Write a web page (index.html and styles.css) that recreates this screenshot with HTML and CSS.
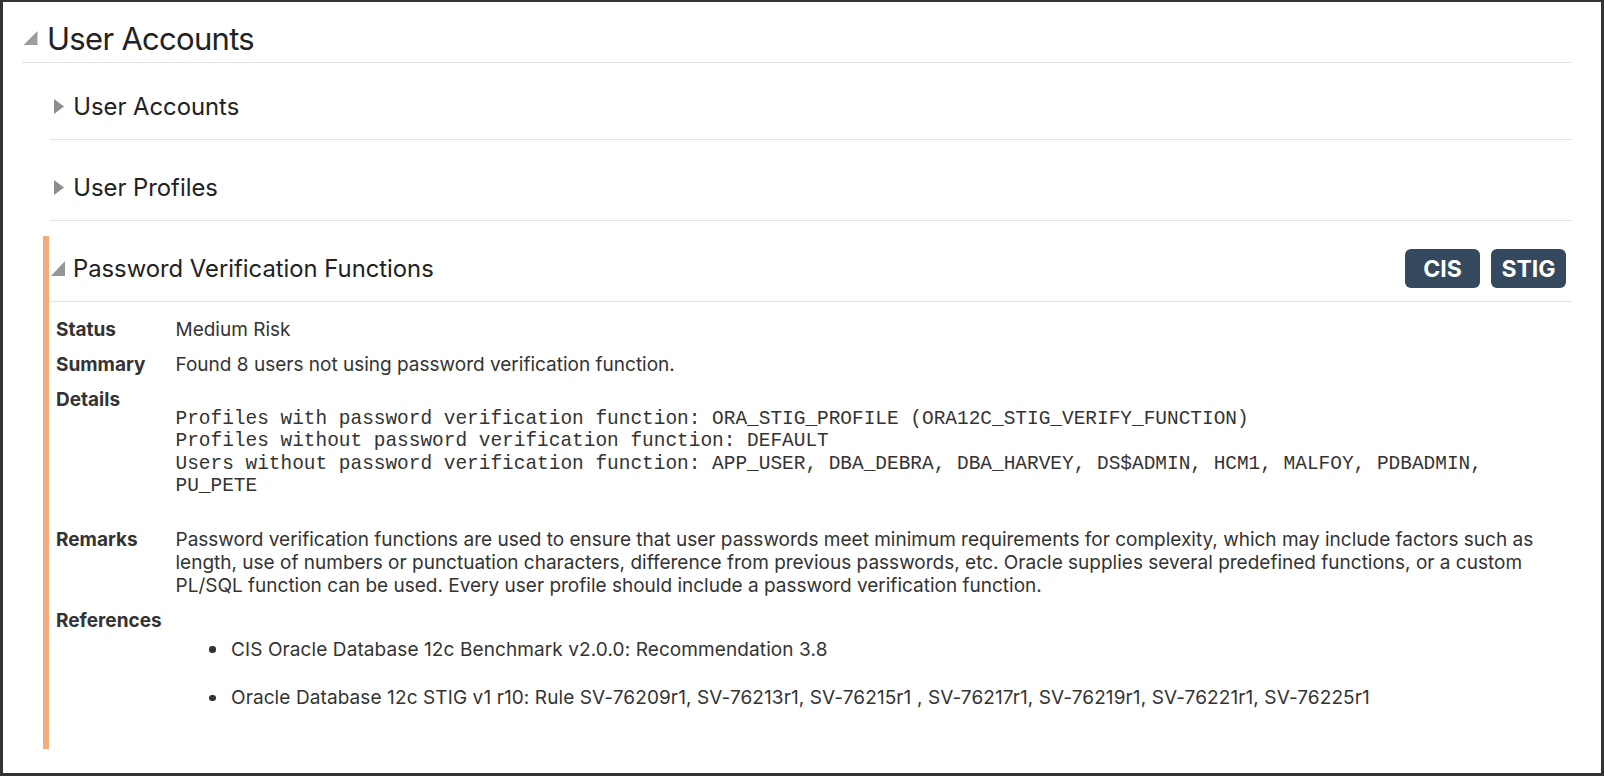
FILE: index.html
```html
<!DOCTYPE html>
<html lang="en">
<head>
<meta charset="utf-8">
<title>User Accounts</title>
<link rel="stylesheet" href="styles.css">
</head>
<body>
<div class="frame">
  <section class="group">
    <h1 class="group-title">
      <svg class="tri tri-open-lg" viewBox="0 0 15 15" aria-hidden="true"><polygon points="15,0 15,15 0,15"/></svg>
      <span>User Accounts</span>
    </h1>
    <div class="group-body">
      <section class="item">
        <div class="item-head">
          <svg class="tri tri-closed" viewBox="0 0 10 15" aria-hidden="true"><polygon points="0,0 10,7.5 0,15"/></svg>
          <h2>User Accounts</h2>
        </div>
      </section>
      <section class="item">
        <div class="item-head">
          <svg class="tri tri-closed" viewBox="0 0 10 15" aria-hidden="true"><polygon points="0,0 10,7.5 0,15"/></svg>
          <h2>User Profiles</h2>
        </div>
      </section>
      <section class="item item-flagged">
        <div class="item-head">
          <svg class="tri tri-open" viewBox="0 0 14 15" aria-hidden="true"><polygon points="14,0 14,15 0,15"/></svg>
          <h2>Password Verification Functions</h2>
          <div class="badges">
            <span class="badge">CIS</span>
            <span class="badge">STIG</span>
          </div>
        </div>
        <dl class="facts">
          <dt>Status</dt>
          <dd>Medium Risk</dd>
          <dt>Summary</dt>
          <dd>Found 8 users not using password verification function.</dd>
          <dt>Details</dt>
          <dd><pre class="details">Profiles with password verification function: ORA_STIG_PROFILE (ORA12C_STIG_VERIFY_FUNCTION)
Profiles without password verification function: DEFAULT
Users without password verification function: APP_USER, DBA_DEBRA, DBA_HARVEY, DS$ADMIN, HCM1, MALFOY, PDBADMIN,
PU_PETE</pre></dd>
          <dt>Remarks</dt>
          <dd>Password verification functions are used to ensure that user passwords meet minimum requirements for complexity, which may include factors such as length, use of numbers or punctuation characters, difference from previous passwords, etc. Oracle supplies several predefined functions, or a custom PL/SQL function can be used. Every user profile should include a password verification function.</dd>
          <dt>References</dt>
          <dd>
            <ul class="refs">
              <li>CIS Oracle Database 12c Benchmark v2.0.0: Recommendation 3.8</li>
              <li>Oracle Database 12c STIG v1 r10: Rule SV-76209r1, SV-76213r1, SV-76215r1 , SV-76217r1, SV-76219r1, SV-76221r1, SV-76225r1</li>
            </ul>
          </dd>
        </dl>
      </section>
    </div>
  </section>
</div>
</body>
</html>
```
FILE: styles.css
```css
* { box-sizing: border-box; }

html, body {
  margin: 0;
  padding: 0;
  background: #ffffff;
}

body {
  font-family: Inter, "Liberation Sans", sans-serif;
  color: #333333;
}

.frame {
  height: 776px;
  border: 3px solid #333333;
  border-top-width: 2px;
  padding: 0 29px 0 19px;
  overflow: hidden;
}

/* top level group */
.group-title {
  display: flex;
  align-items: center;
  margin: 0;
  padding: 17px 0 3px 1px;
  border-bottom: 1px solid #e3e3e3;
  font-size: 31px;
  font-weight: 400;
  letter-spacing: -0.7px;
  line-height: 40px;
  color: #222222;
}

.tri { display: block; flex: none; fill: #959595; }

.tri-open-lg {
  width: 14.5px;
  height: 14.5px;
  margin: 0 9.5px 2px 0;
  fill: #9c9c9c;
}

.group-body {
  margin-left: 28px;
}

/* collapsible items */
.item { margin-top: 15px; }
.item:first-child { margin-top: 11px; }

.item-head {
  display: flex;
  align-items: center;
  padding: 13px 6px 13px 0;
  border-bottom: 1px solid #e3e3e3;
}

.item-head h2 {
  margin: 0;
  font-size: 23.8px;
  font-weight: 400;
  line-height: 39px;
  color: #222222;
}

.tri-closed {
  width: 10px;
  height: 15px;
  margin: 0 9px 0 4.3px;
  fill: #8e8e8e;
}

.tri-open {
  width: 14px;
  height: 15px;
  margin: 0 8px 0 1px;
  fill: #959595;
}

.item-flagged {
  margin-left: -7px;
  border-left: 6px solid #f5aa7a;
  padding-left: 1px;
}

.badges {
  display: flex;
  gap: 11px;
  margin-left: auto;
}

.badge {
  display: flex;
  align-items: center;
  justify-content: center;
  width: 75px;
  height: 39px;
  border-radius: 6px;
  background: #34495e;
  color: #ffffff;
  font-size: 23px;
  font-weight: 700;
}

/* fact list */
.facts {
  display: grid;
  grid-template-columns: 119.5px 1fr;
  row-gap: 12px;
  margin: 0;
  padding: 16px 0 40px 6px;
  font-size: 19px;
  line-height: 23px;
}

.facts dt {
  font-weight: 700;
  color: #333333;
}

.facts dd {
  margin: 0;
  color: #333333;
}

.details {
  margin: 20px 0 18px;
  font-family: "Liberation Mono", "Courier New", monospace;
  font-size: 19.45px;
  line-height: 22.45px;
  color: #333333;
  white-space: pre;
}

.refs {
  list-style: none;
  margin: 29px 0 0;
  padding: 0;
  letter-spacing: 0.1px;
}

.refs li {
  display: flex;
  align-items: center;
}

.refs li + li { margin-top: 25.6px; }

.refs li::before {
  content: "";
  flex: none;
  width: 6.5px;
  height: 6.5px;
  border-radius: 50%;
  background: #333333;
  margin: 0 15.5px 0 33.5px;
}
```
